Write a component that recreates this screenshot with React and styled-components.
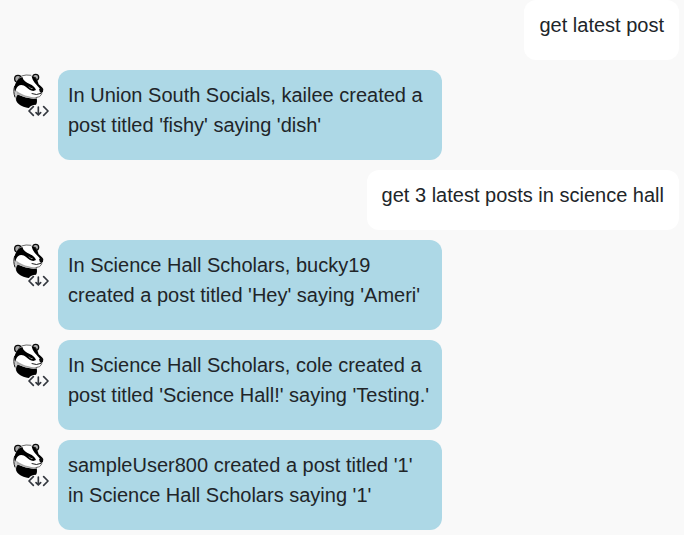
import React from "react";
import styled, { createGlobalStyle } from "styled-components";

const GlobalStyle = createGlobalStyle`
  *, *::before, *::after { box-sizing: border-box; }
  body {
    margin: 0;
    background: #f9f9f9;
    color: #212529;
    font-family: "Liberation Sans", Arial, sans-serif;
    font-size: 20px;
    line-height: 30px;
  }
`;

const Chat = styled.main`
  display: flex;
  flex-direction: column;
  gap: 10px;
  padding: 0 5px 5px 13px;
`;

const Row = styled.div`
  display: flex;
  align-items: flex-start;
  gap: 9px;
  justify-content: ${({ $own }) => ($own ? "flex-end" : "flex-start")};
`;

const Bubble = styled.p`
  margin: 0;
  padding: ${({ $own }) => ($own ? "10px 15px 20px" : "10px 10px 20px")};
  max-width: ${({ $own }) => ($own ? "60%" : "384px")};
  width: ${({ $own }) => ($own ? "auto" : "100%")};
  border-radius: 12px;
  background: ${({ $own }) => ($own ? "#ffffff" : "#add8e6")};
`;

const Avatar = styled.svg`
  flex: none;
  width: 36px;
  height: 46px;
  margin-top: 2px;
`;

function BadgerAvatar() {
  return (
    <Avatar viewBox="9 6 108 138" role="img" aria-label="Badger assistant">
      {/* neck */}
      <path fill="#c8c8c8" d="M15 48 C10 66 12 84 20 94 L30 74 Z" />
      <path fill="none" stroke="#222" strokeWidth="3" d="M14 48 C10 60 11 70 15 82" />
      <path fill="#000" d="M23 74 C32 76 44 82 56 84 C64 86 72 87 80 85 C82 93 81 100 78 104 C68 104 59 108 57 114 C42 113 27 106 21 97 C16 89 18 80 23 74 Z" />
      {/* ears */}
      <circle cx="24" cy="26" r="10" fill="#a8a8a8" stroke="#0a0a0a" strokeWidth="4" />
      <path fill="#111" d="M24 28 L30 21 36 25 28 36 Z" />
      <circle cx="77" cy="22" r="9" fill="#b4b4b4" stroke="#0a0a0a" strokeWidth="4" />
      <path fill="#111" d="M70 22 L76 20 82 29 80 34 Z" />
      {/* face */}
      <path fill="#fff" d="M17 40 C24 25 38 15 56 15 C72 16 82 27 86 43 C88 50 99 52 99 61 C99 70 94 80 84 83 C66 85 46 80 30 72 C19 68 13 54 17 40 Z" />
      <path fill="none" stroke="#222" strokeWidth="2" d="M34 18 Q48 13 64 16" />
      <path fill="#000" d="M16 42 C20 30 29 23 37 21 C40 32 48 38 59 42 C68 46 75 52 78 60 L70 63 C62 62 55 58 49 52 C40 44 31 43 24 49 C19 54 17 60 16 65 C12 59 12 50 16 42 Z" />
      <path fill="#000" d="M65 18 C77 19 83 30 86 43 C92 48 98 52 99 58 L92 58 C86 51 79 44 74 38 C69 32 66 25 65 18 Z" />
      <path fill="none" stroke="#ddd" strokeWidth="2" d="M57 50 L63 56 68 55" />
      <path fill="#a8a8a8" d="M19 62 C29 68 41 77 56 79 C64 82 74 83 84 80 L78 86 C59 86 40 81 22 72 Z" />
      {/* nose and mouth */}
      <path fill="#0a0a0a" d="M87 57 Q95 51 100 57 Q101 66 94 69 Q88 66 87 57 Z" />
      <path fill="none" stroke="#222" strokeWidth="3" strokeLinecap="round" d="M66 71 Q79 77 94 70" />
      <path fill="none" stroke="#333" strokeWidth="2" d="M77 83 Q91 83 96 71" />
      {/* brackets and arrow */}
      <path fill="none" stroke="#34383f" strokeWidth="5" strokeLinecap="round" strokeLinejoin="round" d="M70 110 L57 123 70 136 M101 110 L114 123 101 136" />
      <path fill="none" stroke="#34383f" strokeWidth="5" strokeLinecap="round" strokeLinejoin="round" d="M85 111 V134 M78 128 L85 135 92 128" />
    </Avatar>
  );
}

const messages = [
  { own: true, text: "get latest post" },
  { text: "In Union South Socials, kailee created a post titled 'fishy' saying 'dish'" },
  { own: true, text: "get 3 latest posts in science hall" },
  { text: "In Science Hall Scholars, bucky19 created a post titled 'Hey' saying 'Ameri'" },
  { text: "In Science Hall Scholars, cole created a post titled 'Science Hall!' saying 'Testing.'" },
  { text: "sampleUser800 created a post titled '1' in Science Hall Scholars saying '1'" },
];

export default function App() {
  return (
    <>
      <GlobalStyle />
      <Chat>
        {messages.map(({ own, text }) => (
          <Row key={text} $own={own}>
            {!own && <BadgerAvatar />}
            <Bubble $own={own}>{text}</Bubble>
          </Row>
        ))}
      </Chat>
    </>
  );
}
